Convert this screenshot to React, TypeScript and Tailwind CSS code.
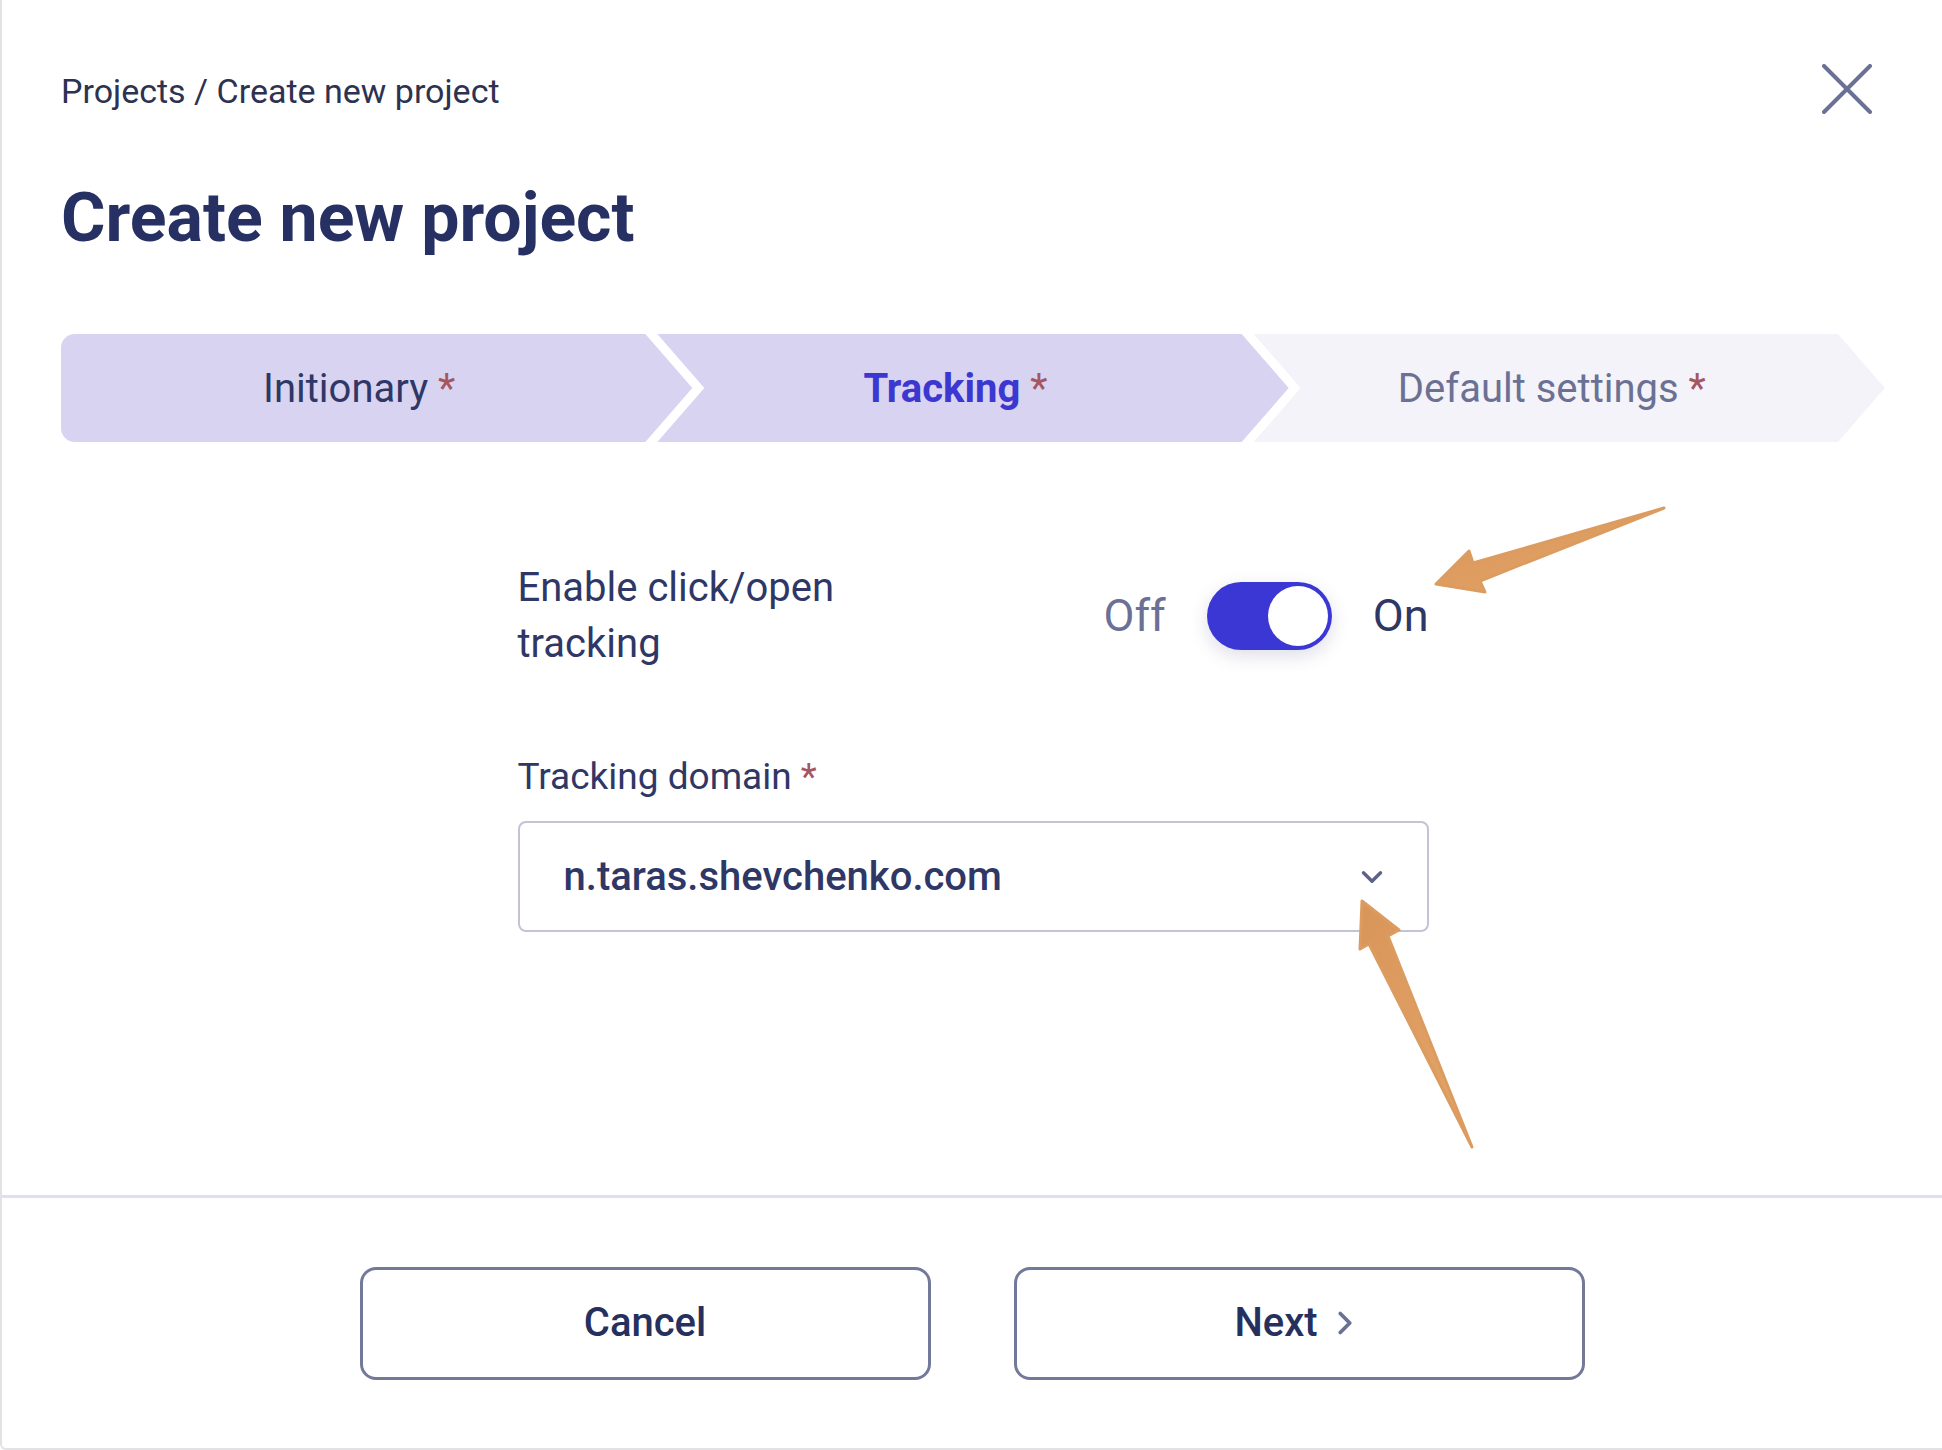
import { ChevronDown, ChevronRight } from 'lucide-react'

const steps = [
  { label: 'Initionary', state: 'done' },
  { label: 'Tracking', state: 'active' },
  { label: 'Default settings', state: 'todo' },
]

function Stepper() {
  return (
    <div className="flex h-[108px]">
      {steps.map((step, i) => (
        <div
          key={step.label}
          className={`flex flex-1 items-center justify-center pr-[35px] pt-[2px] ${
            i === 0
              ? 'rounded-l-[14px] [clip-path:polygon(0_0,calc(100%_-_47px)_0,100%_50%,calc(100%_-_47px)_100%,0_100%)]'
              : '-ml-[35px] [clip-path:polygon(0_0,calc(100%_-_47px)_0,100%_50%,calc(100%_-_47px)_100%,0_100%,47px_50%)]'
          } ${step.state === 'todo' ? 'bg-[#f4f3f9]' : 'bg-[#d8d3f1]'}`}
        >
          <span
            className={`text-[40px] leading-none ${
              step.state === 'active'
                ? 'font-bold text-[#3b37d0]'
                : step.state === 'done'
                  ? 'text-[#2f3766]'
                  : 'text-[#6b7194]'
            }`}
          >
            {step.label} <span className="font-normal text-[#a5565e]">*</span>
          </span>
        </div>
      ))}
    </div>
  )
}

function Arrows() {
  return (
    <svg className="pointer-events-none absolute inset-0" width="1942" height="1450" viewBox="0 0 1942 1450">
      <defs>
        <linearGradient id="arrowFill" x1="0" y1="0" x2="1" y2="1">
          <stop offset="0" stopColor="#d8955a" />
          <stop offset="1" stopColor="#e6a668" />
        </linearGradient>
      </defs>
      <g fill="url(#arrowFill)" stroke="#dc9c60" strokeWidth="3" strokeLinejoin="round">
        <polygon points="1434,584 1467,551 1471,563 1662,508 1478,581 1483,592" />
        <polygon points="1360,901 1397,930 1386,936 1470,1147 1367,944 1358,949" />
      </g>
    </svg>
  )
}

export default function App() {
  return (
    <div className="relative flex h-[1450px] w-[1942px] flex-col overflow-hidden rounded-bl-[6px] border-b-2 border-l-2 border-[#e2e2e6] bg-white font-['Roboto',sans-serif]">
      <div className="flex-1 pl-[59px] pr-[57px]">
        <div className="flex items-start justify-between pt-[71px]">
          <div className="text-[34px] leading-[40px] text-[#2d3250]">Projects / Create new project</div>
          <button className="-mt-[7px] mr-[13px] text-[#6b7194]">
            <svg width="50" height="50" viewBox="0 0 50 50" fill="none" stroke="currentColor" strokeWidth="4" strokeLinecap="round">
              <path d="M2 2L48 48M48 2L2 48" />
            </svg>
          </button>
        </div>
        <h1 className="mt-[64px] text-[68px] font-bold leading-[80px] text-[#263063]">Create new project</h1>
        <div className="mt-[76px]">
          <Stepper />
        </div>

        <div className="mx-auto mt-[118px] w-[911px]">
          <div className="flex items-center justify-between">
            <div className="w-[380px] text-[40px] leading-[56px] text-[#2f3766]">Enable click/open tracking</div>
            <div className="flex items-center gap-[41px]">
              <span className="text-[45px] text-[#6b7194]">Off</span>
              <div className="flex h-[68px] w-[125px] items-center justify-end rounded-full bg-[#3b37d4] p-[4px] shadow-[0_6px_18px_rgba(70,70,130,0.18)]">
                <div className="h-[60px] w-[60px] rounded-full bg-white" />
              </div>
              <span className="text-[45px] text-[#2f3766]">On</span>
            </div>
          </div>

          <div className="mt-[77px] text-[37px] leading-[56px] text-[#2f3766]">
            Tracking domain <span className="text-[#a5565e]">*</span>
          </div>
          <div className="mt-[16px] flex h-[111px] items-center justify-between rounded-[8px] border-2 border-[#c2c4d6] pl-[44px] pr-[38px]">
            <span className="text-[40px] font-medium text-[#2f3766]">n.taras.shevchenko.com</span>
            <ChevronDown className="text-[#5d6388]" size={34} strokeWidth={2.4} />
          </div>
        </div>
      </div>

      <div className="h-[3px] bg-[#e1def4]" />

      <div className="flex h-[250px] items-center justify-center gap-[83px]">
        <button className="flex h-[113px] w-[571px] items-center justify-center rounded-[16px] border-[3px] border-[#737999] text-[40px] font-medium text-[#26305e]">
          Cancel
        </button>
        <button className="flex h-[113px] w-[571px] items-center justify-center gap-[8px] rounded-[16px] border-[3px] border-[#737999] text-[40px] font-medium text-[#26305e]">
          Next
          <ChevronRight className="text-[#6b7194]" size={38} strokeWidth={2.4} />
        </button>
      </div>

      <Arrows />
    </div>
  )
}
